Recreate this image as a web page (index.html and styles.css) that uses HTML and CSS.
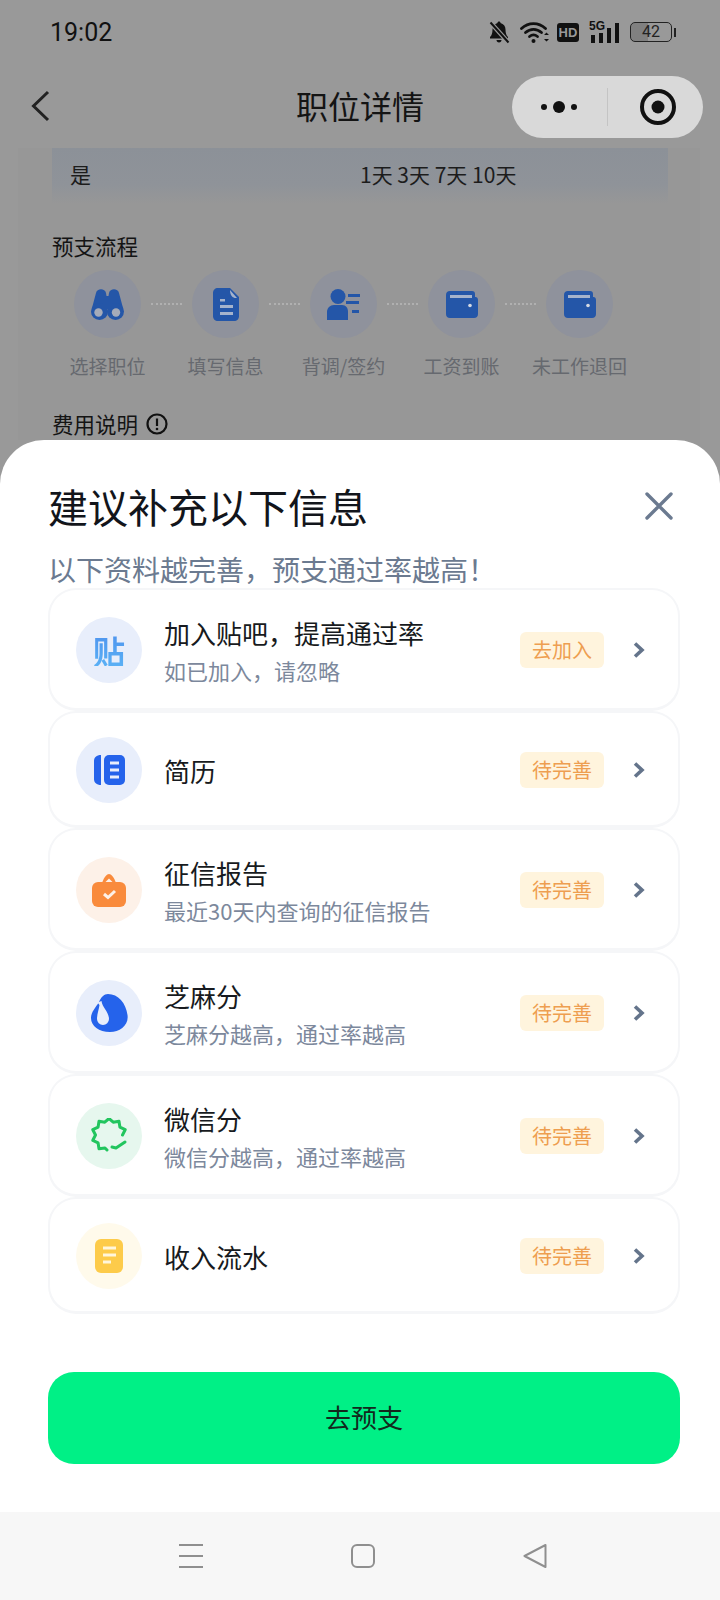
FILE: index.html
```html
<!doctype html>
<html lang="zh-CN">
    <head>
        <meta charset="utf-8">
        <title>职位详情</title>
        <link rel="stylesheet" href="styles.css">
    </head>
    <body>
        <div class="top">
            <div class="status">
                <span class="time">19:02</span>
                <div class="status-icons">
                    <svg width="22" height="24" viewBox="0 0 22 24"><path d="M11 1.500c-.9 0-1.500.6-1.500 1.400C6.500 3.700 4.500 6.200 4.500 9.500c0 4-.8 5.800-2.500 7.500v1.500h18V17c-1.700-1.700-2.500-3.500-2.500-7.500 0-3.300-2-5.800-5-6.600 0-.8-.6-1.400-1.500-1.400z" fill="#111"/><path d="M8.500 20h5c0 1.500-1 2.500-2.500 2.500S8.500 21.500 8.500 20z" fill="#111"/><path d="M2 2l18 20" stroke="#999" stroke-width="4.500"/><path d="M2.500 2.500l18 20" stroke="#111" stroke-width="2"/></svg>
                    <svg class="wifi" width="30" height="24" viewBox="0 0 30 24" fill="none" stroke="#111" stroke-width="2.800" stroke-linecap="round"><path d="M1.500 8.500c7-6.500 17-6.500 24 0"/><path d="M5.500 12.500c4.800-4.300 11.200-4.300 16 0"/><path d="M9.500 16.500c2.700-2.200 5.300-2.200 8 0"/><circle cx="13.500" cy="21" r="2" fill="#111" stroke="none"/><path d="M24 15l2.500-2.500 2.500 2.500zM24 19l2.500 2.500 2.500-2.500z" fill="#111" stroke="none"/></svg>
                    <span class="hd">HD</span>
                    <svg width="31" height="24" viewBox="0 0 31 24"><text x="0" y="10" class="five-g">5G</text><rect x="2" y="15" width="4" height="8" fill="#111"/><rect x="10" y="13" width="4" height="10" fill="#111"/><rect x="18" y="8" width="4" height="15" fill="#111"/><rect x="26" y="3" width="4" height="20" fill="#111"/></svg>
                    <div class="battery">
                        <div class="battery-body"><span>42</span></div>
                        <div class="battery-cap"></div>
                    </div>
                </div>
            </div>
            <header class="nav">
                <svg class="back" width="20" height="32" viewBox="0 0 20 32" fill="none"><path d="M18 2L3.500 16 18 30" stroke="#222" stroke-width="3"/></svg>
                <h1>职位详情</h1>
                <div class="capsule">
                    <svg width="44" height="14" viewBox="0 0 44 14"><circle cx="7" cy="7" r="3" fill="#111"/><circle cx="22" cy="7" r="6" fill="#111"/><circle cx="37" cy="7" r="3" fill="#111"/></svg>
                    <div class="capsule-line"></div>
                    <svg width="38" height="38" viewBox="0 0 38 38"><circle cx="19" cy="19" r="16" fill="none" stroke="#111" stroke-width="4"/><circle cx="19" cy="19" r="6.500" fill="#111"/></svg>
                </div>
            </header>
        </div>

        <main class="behind">
            <div class="row-yes">
                <span class="yes">是</span>
                <span class="days">1天 3天 7天 10天</span>
            </div>
            <h2 class="flow-title">预支流程</h2>
            <div class="steps">
                <div class="step">
                    <div class="step-circle">
                        <svg width="33" height="31" viewBox="0 0 33 31"><path d="M5 4c1-5 9-5 10 0l.5 3h2l.5-3c1-5 9-5 10 0l4 15H1z" fill="#2456a8"/><circle cx="8.500" cy="22.500" r="8.500" fill="#2456a8"/><circle cx="24.500" cy="22.500" r="8.500" fill="#2456a8"/><rect x="12" y="10" width="9" height="10" fill="#2456a8"/><circle cx="7.500" cy="23.500" r="4.200" fill="#a5abb9"/><circle cx="25" cy="23.500" r="4.200" fill="#a5abb9"/></svg>
                    </div>
                    <span>选择职位</span>
                </div>
                <div class="dots"></div>
                <div class="step">
                    <div class="step-circle">
                        <svg width="26" height="33" viewBox="0 0 26 33"><path d="M5 0h12l9 9v19c0 3-2 5-5 5H5c-3 0-5-2-5-5V5c0-3 2-5 5-5z" fill="#2456a8"/><path d="M17 2l7 8c-4 .5-7-2-7-8z" fill="#a5b3cc"/><path d="M7 11h5v2.500H7z" fill="#a5b3cc"/><path d="M7 17h13v3H7zM7 24h13v3H7z" fill="#a5b3cc"/></svg>
                    </div>
                    <span>填写信息</span>
                </div>
                <div class="dots"></div>
                <div class="step">
                    <div class="step-circle">
                        <svg width="33" height="31" viewBox="0 0 33 31"><circle cx="11" cy="7.500" r="7.500" fill="#2456a8"/><path d="M0 31v-8c0-4 3-7 7-7h8c4 0 6 3 6 7v8z" fill="#2456a8"/><path d="M21 5h12v3H21zM19 12h13v3H19zM25 21h7v3h-7z" fill="#2456a8"/></svg>
                    </div>
                    <span>背调/签约</span>
                </div>
                <div class="dots"></div>
                <div class="step">
                    <div class="step-circle">
                        <svg width="32" height="27" viewBox="0 0 32 27"><path d="M4 0h22c2 0 3 1 3 3v3h.5c1.500 0 2.500 1 2.500 3v14c0 2.500-1.500 4-4 4H4c-2.500 0-4-1.500-4-4V4c0-2.500 1.500-4 4-4z" fill="#2456a8"/><path d="M4 4h22v3H4z" fill="#a5b3cc"/><circle cx="24" cy="14.500" r="1.800" fill="#d5dae3"/></svg>
                    </div>
                    <span>工资到账</span>
                </div>
                <div class="dots"></div>
                <div class="step">
                    <div class="step-circle">
                        <svg width="32" height="27" viewBox="0 0 32 27"><path d="M4 0h22c2 0 3 1 3 3v3h.5c1.500 0 2.500 1 2.500 3v14c0 2.500-1.500 4-4 4H4c-2.500 0-4-1.500-4-4V4c0-2.500 1.500-4 4-4z" fill="#2456a8"/><path d="M4 4h22v3H4z" fill="#a5b3cc"/><circle cx="24" cy="14.500" r="1.800" fill="#d5dae3"/></svg>
                    </div>
                    <span>未工作退回</span>
                </div>
            </div>
            <h2 class="fee-title">费用说明
                <svg width="22" height="22" viewBox="0 0 22 22" fill="none" stroke="#111"><circle cx="11" cy="11" r="9.500" stroke-width="2.200"/><path d="M11 5.500v7.500" stroke-width="2.200"/><circle cx="11" cy="16" r="1.300" fill="#111" stroke="none"/></svg>
            </h2>
        </main>

        <section class="sheet">
            <div class="sheet-head">
                <h2>建议补充以下信息</h2>
                <svg width="30" height="30" viewBox="0 0 30 30" fill="none"><path d="M3 3l24 24M27 3L3 27" stroke="#6b7a90" stroke-width="3.400" stroke-linecap="round"/></svg>
            </div>
            <p class="sheet-sub">以下资料越完善，预支通过率越高！</p>

            <div class="cards">
                <div class="card">
                    <div class="icon icon-blue"><span class="tie">贴</span></div>
                    <div class="card-text">
                        <div class="card-title">加入贴吧，提高通过率</div>
                        <div class="card-sub">如已加入，请忽略</div>
                    </div>
                    <span class="tag">去加入</span>
                    <svg class="arrow" width="14" height="18" viewBox="0 0 14 18" fill="none"><path d="M3 2.500L10 9l-7 6.500" stroke="#64748b" stroke-width="3.600"/></svg>
                </div>
                <div class="card card-short">
                    <div class="icon icon-blue">
                        <svg width="31" height="30" viewBox="0 0 31 30"><path d="M7 0v30C2.500 30 0 27.500 0 24V6c0-3.500 2.500-6 7-6z" fill="#2563eb"/><rect x="10" y="0" width="21" height="30" rx="5" fill="#2563eb"/><path d="M16 8h9M16 15h9M16 22h9" stroke="#e8eefb" stroke-width="3"/></svg>
                    </div>
                    <div class="card-text">
                        <div class="card-title">简历</div>
                    </div>
                    <span class="tag">待完善</span>
                    <svg class="arrow" width="14" height="18" viewBox="0 0 14 18" fill="none"><path d="M3 2.500L10 9l-7 6.500" stroke="#64748b" stroke-width="3.600"/></svg>
                </div>
                <div class="card">
                    <div class="icon icon-orange">
                        <svg width="34" height="33" viewBox="0 0 34 33"><path d="M10 9C12 3 15 0 17 0s5 3 7 9z" fill="#f98b3c"/><path d="M17 4.500l3.500 3.500h-7z" fill="#fdf1e8"/><rect x="0" y="8" width="34" height="25" rx="6" fill="#f98b3c"/><path d="M12 20l4 3.500 7-6.500" fill="none" stroke="#fdf1e8" stroke-width="3"/></svg>
                    </div>
                    <div class="card-text">
                        <div class="card-title">征信报告</div>
                        <div class="card-sub">最近30天内查询的征信报告</div>
                    </div>
                    <span class="tag">待完善</span>
                    <svg class="arrow" width="14" height="18" viewBox="0 0 14 18" fill="none"><path d="M3 2.500L10 9l-7 6.500" stroke="#64748b" stroke-width="3.600"/></svg>
                </div>
                <div class="card">
                    <div class="icon icon-blue">
                        <svg width="37" height="38" viewBox="0 0 37 38"><path d="M17 0C27 0 35 9 36.500 21 38 31 29 38 19 38 8 38 0 32 0 24c0-6 5-11 8-16 2-5 5-8 9-8z" fill="#2563eb"/><path d="M6.500 8.500l4-1.500c.5 6 7.500 11 7.500 18a6 6 0 0 1-12 0c0-5 2-10 2.500-14z" fill="#e8eefb"/></svg>
                    </div>
                    <div class="card-text">
                        <div class="card-title">芝麻分</div>
                        <div class="card-sub">芝麻分越高，通过率越高</div>
                    </div>
                    <span class="tag">待完善</span>
                    <svg class="arrow" width="14" height="18" viewBox="0 0 14 18" fill="none"><path d="M3 2.500L10 9l-7 6.500" stroke="#64748b" stroke-width="3.600"/></svg>
                </div>
                <div class="card">
                    <div class="icon icon-green">
                        <svg width="36" height="36" viewBox="0 0 36 36" fill="none" stroke="#22c55e" stroke-width="3" stroke-linecap="round" stroke-linejoin="round"><path d="M16 32l-2-2-6 .8-.9-5.900-5.300-2.600L4.500 17l-2.700-5.300 5.300-2.600L8 3.200l5.800 1 4.200-3.700 4.200 3.700 5.800-1 .9 5.900 5.300 2.600L31.500 17"/><path d="M21 29l4 1 9-6"/></svg>
                    </div>
                    <div class="card-text">
                        <div class="card-title">微信分</div>
                        <div class="card-sub">微信分越高，通过率越高</div>
                    </div>
                    <span class="tag">待完善</span>
                    <svg class="arrow" width="14" height="18" viewBox="0 0 14 18" fill="none"><path d="M3 2.500L10 9l-7 6.500" stroke="#64748b" stroke-width="3.600"/></svg>
                </div>
                <div class="card card-short">
                    <div class="icon icon-yellow">
                        <svg width="28" height="34" viewBox="0 0 28 34"><rect width="28" height="34" rx="6" fill="#fdcb4a"/><path d="M8 9h13M8 16h13M8 23h8" stroke="#fff6dc" stroke-width="3"/></svg>
                    </div>
                    <div class="card-text">
                        <div class="card-title">收入流水</div>
                    </div>
                    <span class="tag">待完善</span>
                    <svg class="arrow" width="14" height="18" viewBox="0 0 14 18" fill="none"><path d="M3 2.500L10 9l-7 6.500" stroke="#64748b" stroke-width="3.600"/></svg>
                </div>
            </div>

            <button class="go">去预支</button>
        </section>

        <footer class="sysbar">
            <svg width="24" height="24" viewBox="0 0 24 24" fill="none" stroke="#8f8f8f" stroke-width="2"><path d="M0 1h24M0 12h24M0 23h24"/></svg>
            <svg width="24" height="24" viewBox="0 0 24 24" fill="none" stroke="#8f8f8f" stroke-width="2"><rect x="1" y="1" width="22" height="22" rx="5"/></svg>
            <svg width="24" height="24" viewBox="0 0 24 24" fill="none" stroke="#8f8f8f" stroke-width="2" stroke-linejoin="round"><path d="M22.500 1L1.500 12l21 11z"/></svg>
        </footer>
    </body>
</html>
```

FILE: styles.css
```css
* {
    box-sizing: border-box;
}

body {
    margin: 0;
    width: 720px;
    height: 1600px;
    overflow: hidden;
    background: #999999;
    font-family: "Noto Sans CJK SC", "Noto Sans", sans-serif;
    color: #111;
}

h1, h2, p {
    margin: 0;
    font-weight: normal;
}

/* status bar + title */
.top {
    height: 148px;
    background: #999999;
}

.status {
    height: 64px;
    padding: 0 44px 0 50px;
    display: flex;
    align-items: center;
    justify-content: space-between;
}

.time {
    font-family: Roboto, sans-serif;
    font-size: 25px;
    color: #111;
}

.status-icons {
    display: flex;
    align-items: center;
    gap: 10px;
}

.wifi {
    margin-right: -3px;
}

.hd {
    width: 22px;
    height: 19px;
    background: #111;
    color: #999;
    border-radius: 3px;
    font-family: "Liberation Sans", sans-serif;
    font-size: 13px;
    font-weight: bold;
    line-height: 19px;
    text-align: center;
}

.five-g {
    font-family: "Liberation Sans", sans-serif;
    font-size: 12px;
    font-weight: bold;
    fill: #111;
}

.battery {
    display: flex;
    align-items: center;
    gap: 2px;
}

.battery-body {
    width: 42px;
    height: 20px;
    border: 1.5px solid #222;
    border-radius: 5px;
    background: linear-gradient(90deg, #808080 42%, #999 42%);
    font-family: Roboto, sans-serif;
    font-size: 16px;
    line-height: 17px;
    text-align: center;
    color: #222;
}

.battery-cap {
    width: 2px;
    height: 9px;
    background: #222;
}

.nav {
    height: 84px;
    padding: 0 17px;
    display: grid;
    grid-template-columns: 1fr auto 1fr;
    align-items: center;
}

.back {
    margin-left: 13px;
}

.nav h1 {
    font-size: 32px;
    margin-bottom: 2px;
    color: #141414;
}

.capsule {
    justify-self: end;
    width: 191px;
    height: 62px;
    margin-top: 2px;
    border-radius: 31px;
    background: #d9d9d9;
    display: flex;
    align-items: center;
    padding-left: 25px;
}

.capsule-line {
    width: 1px;
    height: 38px;
    background: #c4c4c4;
    margin: 0 31px 0 26px;
}

/* page behind the sheet */
.behind {
    height: 292px;
    margin: 0 20px 0 18px;
    padding: 0 32px 0 34px;
    overflow: hidden;
    background: #979797;
}

.row-yes {
    height: 56px;
    display: flex;
    align-items: center;
    padding: 0 0 4px 18px;
    background: linear-gradient(180deg, #8c9198, #8f9399 65%, #979797);
    font-size: 21px;
    color: #1c1c1c;
}

.yes {
    width: 290px;
}

.flow-title {
    margin-top: 26px;
    font-size: 21.5px;
    line-height: 32px;
    color: #141414;
}

.steps {
    display: flex;
    align-items: flex-start;
    margin: 8px 0 0 22px;
}

.step {
    width: 67px;
    display: flex;
    flex-direction: column;
    align-items: center;
    flex-shrink: 0;
    font-size: 19px;
    color: #66696f;
    white-space: nowrap;
}

.step-circle {
    width: 67px;
    height: 68px;
    border-radius: 50%;
    background: #8f929c;
    display: flex;
    align-items: center;
    justify-content: center;
    margin-bottom: 14px;
}

.dots {
    width: 31px;
    margin: 33px 10px 0 10px;
    flex-shrink: 0;
    border-top: 2px dotted #b0b0b0;
}

.fee-title {
    margin-top: 29px;
    font-size: 21.5px;
    line-height: 32px;
    color: #141414;
    display: flex;
    align-items: center;
    gap: 8px;
}

/* bottom sheet */
.sheet {
    height: 1072px;
    padding: 42px 40px 0 48px;
    background: #fff;
    border-radius: 44px 44px 0 0;
}

.sheet-head {
    display: flex;
    align-items: center;
    justify-content: space-between;
    padding-right: 6px;
}

.sheet-head h2 {
    font-size: 40px;
    line-height: 48px;
    color: #12151b;
}

.sheet-sub {
    margin-top: 20px;
    font-size: 28px;
    line-height: 38px;
    color: #6b7a90;
}

.cards {
    display: flex;
    flex-direction: column;
}

.card {
    height: 123px;
    padding: 2px 32px 0 26px;
    display: flex;
    align-items: center;
    border: 2px solid #f5f6f8;
    border-bottom-width: 3px;
    border-radius: 28px;
}

.card-short {
    height: 117px;
}

.icon {
    width: 66px;
    height: 66px;
    border-radius: 50%;
    flex-shrink: 0;
    display: flex;
    align-items: center;
    justify-content: center;
}

.icon-blue {
    background: #e8eefb;
}

.icon-orange {
    background: #fdf1e8;
}

.icon-green {
    background: #e6f7ee;
}

.icon-yellow {
    background: #fffaeb;
}

.tie {
    font-size: 32px;
    font-weight: bold;
    line-height: 1;
    background: linear-gradient(180deg, #4f95ee, #5ab0f5);
    -webkit-background-clip: text;
    background-clip: text;
    color: transparent;
}

.card-text {
    flex: 1;
    margin-left: 22px;
}

.card-title {
    font-size: 26px;
    line-height: 37px;
    color: #171a20;
}

.card-sub {
    font-size: 22px;
    line-height: 32px;
    margin-top: 3px;
    color: #7c889c;
}

.tag {
    width: 84px;
    height: 36px;
    border-radius: 6px;
    background: #fff4dd;
    font-size: 20px;
    line-height: 36px;
    text-align: center;
    color: #ee9e50;
}

.arrow {
    margin-left: 28px;
}

.go {
    display: block;
    width: 632px;
    height: 92px;
    margin-top: 58px;
    padding-bottom: 4px;
    border: none;
    border-radius: 26px;
    background: #00f086;
    font-family: inherit;
    font-size: 26px;
    color: #12291d;
}

/* android nav */
.sysbar {
    height: 88px;
    padding-left: 6px;
    background: #f7f7f7;
    display: flex;
    align-items: center;
    justify-content: center;
    gap: 148px;
}
```
